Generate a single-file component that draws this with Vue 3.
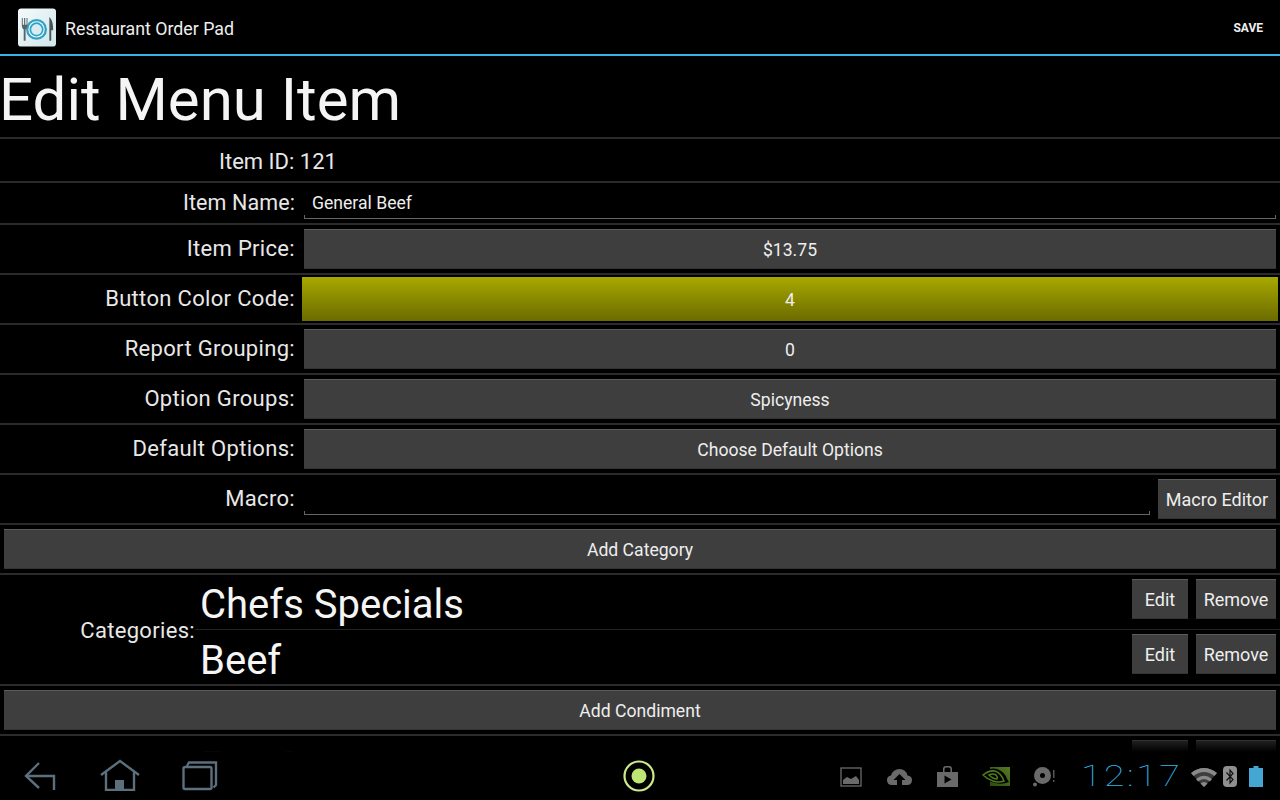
<template>
  <div class="screen">
    <header class="action-bar">
      <div class="app-icon">
        <svg width="40" height="40" viewBox="0 0 40 40">
          <defs>
            <linearGradient id="iconBg" x1="0" y1="0" x2="1" y2="1">
              <stop offset="0" stop-color="#f6fafb" />
              <stop offset="1" stop-color="#cfe6ec" />
            </linearGradient>
          </defs>
          <rect width="40" height="40" rx="3" fill="url(#iconBg)" />
          <circle cx="19.500" cy="22" r="11" fill="#2fa3c4" />
          <circle cx="19.500" cy="22" r="8.600" fill="#eef7f9" />
          <circle cx="19.500" cy="22" r="7.400" fill="#2fa3c4" />
          <circle cx="19.500" cy="22" r="5.600" fill="#d8ecf1" />
          <path d="M4 10v8q0 3 2 4v12h2V22q2-1 2-4v-8H9v7H7.600v-7H6.400v7H5v-7z" fill="#5a6468" />
          <path d="M33 9q4 3 4 14h-2v11h-2z" fill="#4a5256" />
        </svg>
      </div>
      <span class="app-title">Restaurant Order Pad</span>
      <span class="save">SAVE</span>
    </header>

    <main class="content">
      <h1 class="page-title">Edit Menu Item</h1>

      <div class="row row-id">
        <span class="id-text">Item ID: 121</span>
      </div>

      <div class="row row-name">
        <label class="row-label">Item Name:</label>
        <div class="text-field name-field">General Beef</div>
      </div>

      <div v-for="field in fields" :key="field.label" class="row">
        <label class="row-label">{{ field.label }}</label>
        <button class="btn wide" :class="{ yellow: field.yellow }">{{ field.value }}</button>
      </div>

      <div class="row">
        <label class="row-label">Macro:</label>
        <div class="text-field macro-field"></div>
        <button class="btn macro-btn">Macro Editor</button>
      </div>

      <div class="row full-row">
        <button class="btn wide">Add Category</button>
      </div>

      <div class="categories">
        <label class="cat-label">Categories:</label>
        <div class="cat-list">
          <div v-for="(cat, i) in categories" :key="cat" class="cat-row" :class="{ first: i === 0 }">
            <span class="cat-name">{{ cat }}</span>
            <button class="btn edit-btn">Edit</button>
            <button class="btn remove-btn">Remove</button>
          </div>
        </div>
      </div>

      <div class="row full-row">
        <button class="btn wide">Add Condiment</button>
      </div>

      <div class="cut-row">
        <span class="cut-name">Egg Sauce</span>
        <button class="btn edit-btn"></button>
        <button class="btn remove-btn"></button>
      </div>
    </main>

    <footer class="system-bar">
      <div class="nav-buttons">
        <svg width="34" height="30" viewBox="0 0 34 30" fill="none" stroke="#5b6f7c" stroke-width="2.400">
          <path d="M16 2 3 15l13 12" />
          <path d="M3 15h28v14" />
        </svg>
        <svg class="home" width="40" height="32" viewBox="0 0 40 32" fill="none" stroke="#5b6f7c" stroke-width="2.400">
          <path d="M1 16 20 2l19 14" />
          <path d="M6 13v18h28V13" />
          <rect x="15" y="21" width="9" height="10" fill="#5b6f7c" stroke="none" />
        </svg>
        <svg class="recent" width="36" height="30" viewBox="0 0 36 30" fill="none" stroke="#5b6f7c">
          <rect x="1.500" y="6" width="28" height="22" rx="1.500" stroke-width="2.400" />
          <path d="M5 5 7 1.500h27V24l-2.500 2.500" stroke-width="2.400" />
        </svg>
      </div>

      <svg class="launcher" width="34" height="34" viewBox="0 0 34 34">
        <circle cx="17" cy="17" r="14.500" fill="none" stroke="#cdea8a" stroke-width="2.200" />
        <circle cx="17" cy="17" r="7.500" fill="#bfe574" />
      </svg>

      <div class="tray">
        <svg width="22" height="20" viewBox="0 0 22 20">
          <rect x="1" y="1" width="20" height="18" fill="none" stroke="#6a6a6a" stroke-width="1.300" />
          <path d="M3 17v-4l4-3 4 2 5-3 3 4v4z" fill="#6a6a6a" />
        </svg>
        <svg width="25" height="18" viewBox="0 0 25 18">
          <path d="M5 17q-5 0-5-5 0-4 4-4.500Q6 1 12.500 1 19 1 20.500 7.500 25 8 25 12q0 5-5 5h-5v-5h3.500l-6-6-6 6H10v5z" fill="#6a6a6a" />
        </svg>
        <svg width="21" height="21" viewBox="0 0 21 21">
          <path d="M0 6h6V3q0-3 3-3h3q3 0 3 3v3h6v15H0zM7.500 6h6V3.500q0-2-1.500-2H9Q7.500 1.500 7.500 3.500z" fill="#6a6a6a" fill-rule="evenodd" />
          <path d="M7.500 9.500v8l7-4z" fill="#000" />
        </svg>
        <svg width="30" height="20" viewBox="0 0 30 20">
          <defs>
            <linearGradient id="nvGreen" x1="1" y1="0" x2="0" y2="1">
              <stop offset="0" stop-color="#557a22" />
              <stop offset="1" stop-color="#2f4a10" />
            </linearGradient>
          </defs>
          <rect x="10" y="0" width="20" height="19" fill="url(#nvGreen)" />
          <path d="M1 8q7-8 16-6 8 3 10 10l2 3q-7 3-14 1Q6 14 1 8z" fill="#000" />
          <path d="M3 8q6-5 12-4 6 2 9 10-6 2-11 0Q7 12 3 8z" fill="none" stroke="#4d7a1a" stroke-width="1.600" />
          <path d="M9 8q4-2 7 0 2 2 1 4-4 0-8-4z" fill="none" stroke="#4d7a1a" stroke-width="1.600" />
        </svg>
        <svg width="24" height="21" viewBox="0 0 24 21">
          <circle cx="9.500" cy="9.500" r="8.500" fill="#6a6a6a" />
          <circle cx="9.500" cy="9.500" r="2.500" fill="#000" />
          <circle cx="2" cy="18.500" r="2" fill="#6a6a6a" />
          <path d="M20 4h1.500v8H20zM20 14h1.500v2H20z" fill="#555" />
        </svg>
      </div>

      <div class="clock"><span>12:17</span></div>

      <div class="status">
        <svg width="26" height="20" viewBox="0 0 26 20">
          <path d="M0 6q13-10 26 0L13 20z" fill="#3d3d3d" />
          <path d="M0 6q13-10 26 0l-2.500 3Q13 1 2.500 9zM5 12q8-6.500 16 0l-2 2.500q-6-5-12 0zM9.500 16.500q3.500-3 7 0L13 20z" fill="#8a8a8a" />
        </svg>
        <svg width="14" height="21" viewBox="0 0 14 21">
          <rect width="14" height="21" rx="4" fill="#8f8f8f" />
          <path d="M3.500 6.500 10 13.500 7 17V4l3 3.500L3.500 14.500" fill="none" stroke="#111" stroke-width="1.200" />
        </svg>
        <svg class="battery" width="14" height="21" viewBox="0 0 14 21">
          <path d="M4.500 0h5v2H14v19H0V2h4.500z" fill="#45a6d3" />
        </svg>
      </div>
    </footer>
  </div>
</template>

<script setup>
const fields = [
  { label: 'Item Price:', value: '$13.75' },
  { label: 'Button Color Code:', value: '4', yellow: true },
  { label: 'Report Grouping:', value: '0' },
  { label: 'Option Groups:', value: 'Spicyness' },
  { label: 'Default Options:', value: 'Choose Default Options' },
]

const categories = ['Chefs Specials', 'Beef']
</script>

<style>
html,
body {
  margin: 0;
  background: #000;
}
</style>

<style scoped>
.screen {
  width: 1280px;
  height: 800px;
  overflow: hidden;
  display: flex;
  flex-direction: column;
  background: #000;
  color: #f2f2f2;
  font-family: Roboto, "Liberation Sans", sans-serif;
}

.action-bar {
  flex: none;
  height: 54px;
  display: flex;
  align-items: center;
  padding: 0 17px 0 18px;
  border-bottom: 2px solid #33b5e5;
}

.app-icon {
  width: 38px;
  height: 39px;
  margin-top: 1px;
  overflow: hidden;
  border-radius: 3px;
}

.app-icon svg {
  display: block;
  width: 38px;
  height: 39px;
}

.app-title {
  margin-left: 9px;
  padding-top: 2px;
  font-size: 17.800px;
  color: #eee;
}

.save {
  margin-left: auto;
  padding-top: 2px;
  font-size: 12px;
  font-weight: 700;
  color: #f0f0f0;
}

.content {
  flex: 1;
  min-height: 0;
  overflow: hidden;
}

.page-title {
  margin: 0 0 0 -1px;
  height: 81px;
  line-height: 87px;
  font-size: 60px;
  font-weight: 400;
  color: #f5f5f5;
}

.row {
  height: 48px;
  display: flex;
  align-items: center;
  padding: 0 4px 0 0;
  border-top: 2px solid #2b2b2b;
}

.row-id {
  height: 42px;
}

.row-name {
  height: 40px;
}

.row-name .row-label {
  font-size: 21.500px;
  letter-spacing: 0.100px;
}

.id-text {
  margin-left: 219px;
  padding-top: 2px;
  font-size: 22px;
  color: #e8e8e8;
}

.row-label {
  width: 295px;
  flex: none;
  text-align: right;
  font-size: 22px;
  letter-spacing: 0.320px;
  color: #e8e8e8;
  margin-top: -1px;
}

.text-field {
  height: 30px;
  margin-left: 9px;
  box-sizing: border-box;
  border-bottom: 1px solid #666;
  background:
    linear-gradient(#666, #666) left bottom / 1px 3px no-repeat,
    linear-gradient(#666, #666) right bottom / 1px 3px no-repeat;
}

.name-field {
  flex: 1;
  padding-left: 8px;
  font-size: 17.600px;
  line-height: 29px;
  color: #eee;
  margin-top: 2px;
}

.macro-field {
  width: 846px;
  margin-top: 2px;
  flex: none;
}

.btn {
  box-sizing: border-box;
  height: 40px;
  padding: 0;
  border: 0;
  border-top: 1px solid #5c5c5c;
  border-bottom: 1px solid #333;
  background: #3e3e3e;
  color: #eee;
  font-family: inherit;
  font-size: 18px;
}

.wide {
  flex: 1;
  margin-left: 9px;
  padding-top: 2px;
  font-size: 17.600px;
}

.yellow {
  height: 44px;
  margin-left: 7px;
  margin-right: -2px;
  border: 0;
  background: linear-gradient(#a8a800, #6b6b00);
}

.macro-btn {
  width: 118px;
  margin-left: 8px;
}

.full-row .wide {
  margin-left: 4px;
}

.categories {
  height: 109px;
  display: flex;
  align-items: center;
  border-top: 2px solid #2b2b2b;
}

.cat-label {
  width: 195px;
  flex: none;
  padding-top: 2px;
  text-align: right;
  font-size: 22px;
  letter-spacing: 0.320px;
  color: #e8e8e8;
}

.cat-list {
  flex: 1;
  min-width: 0;
}

.cat-row {
  box-sizing: border-box;
  height: 55px;
  display: flex;
  align-items: flex-start;
  padding: 4px 4px 0 5px;
  border-top: 1px solid #222;
}

.cat-row.first {
  border-top: 0;
  height: 54px;
}

.cat-name {
  flex: 1;
  font-size: 40px;
  line-height: 53px;
  color: #f5f5f5;
}

.first .cat-name {
  line-height: 51px;
}

.edit-btn {
  width: 56px;
}

.remove-btn {
  width: 80px;
  margin-left: 8px;
}

.cut-row {
  height: 60px;
  display: flex;
  align-items: flex-start;
  padding: 4px 4px 0 200px;
  border-top: 2px solid #2b2b2b;
}

.cut-name {
  flex: 1;
  font-size: 40px;
  line-height: 53px;
  color: #f5f5f5;
}

.system-bar {
  position: relative;
  flex: none;
  height: 48px;
  display: flex;
  align-items: flex-end;
  padding-bottom: 8px;
  box-sizing: border-box;
  background: #000;
}

.system-bar::before {
  content: "";
  position: absolute;
  left: 0;
  right: 0;
  top: -12px;
  height: 12px;
  background: linear-gradient(rgba(0, 0, 0, 0.45), #000);
}

.nav-buttons {
  width: 622px;
  display: flex;
  align-items: flex-end;
  padding: 0 0 1px 23px;
  box-sizing: border-box;
}

.home {
  margin-left: 43px;
}

.recent {
  margin-left: 42px;
}

.launcher {
  margin-bottom: -1px;
}

.tray {
  margin-left: 184px;
  display: flex;
  align-items: center;
  padding-bottom: 5px;
}

.tray svg:nth-child(2),
.tray svg:nth-child(3) {
  margin-left: 25px;
}

.tray svg:nth-child(4) {
  margin-left: 22px;
}

.tray svg:nth-child(5) {
  margin-left: 23px;
}

.clock {
  margin: 0 0 -2px 24px;
  width: 110px;
  font-size: 30px;
  line-height: 36px;
  font-weight: 100;
  letter-spacing: 2px;
  color: #33b5e5;
}

.clock span {
  display: inline-block;
  transform: scaleX(1.250);
  transform-origin: left center;
}

.status {
  display: flex;
  align-items: center;
  padding-bottom: 5px;
}

.status svg + svg {
  margin-left: 6px;
}

.status .battery {
  margin-left: 12px;
}
</style>
